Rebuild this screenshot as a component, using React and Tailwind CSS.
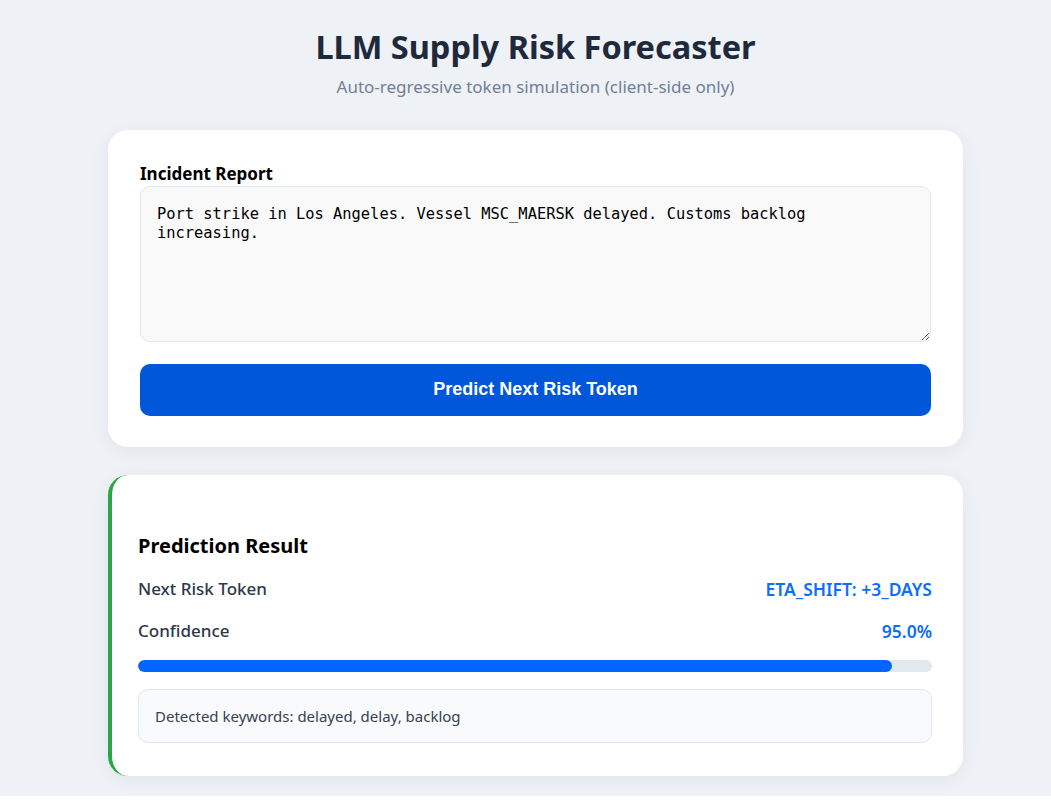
export default function App() {
  const confidence = 95;
  return (
    <div className="min-h-[795px] bg-[#eef1f5] pl-[20px] pt-[25px] pb-[20px]" style={{ fontFamily: '"Noto Sans", "Open Sans", sans-serif' }}>
      <div className="mx-auto w-[855px]">
        <div className="text-center">
          <h1 className="text-[32.5px] leading-[44px] font-bold text-[#1e293b]">LLM Supply Risk Forecaster</h1>
          <p className="mt-[5px] text-[17px] text-[#718096]">Auto-regressive token simulation (client-side only)</p>
        </div>

        <div className="mt-[30px] bg-white rounded-[20px] shadow-[0_4px_20px_rgba(0,0,0,0.06)] px-[32px] pt-[32px] pb-[31px]">
          <label className="block text-[17px] font-bold text-black leading-[24px]">Incident Report</label>
          <textarea
            className="block w-full h-[156px] rounded-[10px] border border-[#e2e8f0] bg-[#f9f9fa] pl-[16px] pr-[20px] pt-[18px] pb-[14px] text-[15.4px] leading-[19.5px] text-black outline-none"
            style={{ fontFamily: '"DejaVu Sans Mono", "Liberation Mono", monospace' }}
            defaultValue="Port strike in Los Angeles. Vessel MSC_MAERSK delayed. Customs backlog increasing."
          />
          <button
            className="mt-[22px] w-full h-[52px] rounded-[10px] bg-[#0057d9] text-white text-[18px] font-bold"
            style={{ fontFamily: '"Liberation Sans", Arial, sans-serif' }}
          >
            Predict Next Risk Token
          </button>
        </div>

        <div className="mt-[28px] bg-white rounded-[20px] border-l-[4px] border-[#28a745] shadow-[0_4px_20px_rgba(0,0,0,0.06)] pl-[26px] pr-[31px] pt-[57px] pb-[33px]">
          <h3 className="text-[20px] font-bold text-black leading-[28px]">Prediction Result</h3>
          <div className="mt-[17px] flex justify-between items-center text-[17px] leading-[24px]">
            <span className="font-medium text-[#2d3748]">Next Risk Token</span>
            <span className="font-semibold text-[#0d6efd] text-[17.5px]">ETA_SHIFT: +3_DAYS</span>
          </div>
          <div className="mt-[18px] flex justify-between items-center text-[17px] leading-[24px]">
            <span className="font-medium text-[#2d3748]">Confidence</span>
            <span className="font-semibold text-[#0d6efd] text-[17.5px]">95.0%</span>
          </div>
          <div className="mt-[17px] h-[12px] w-full rounded-full bg-[#e2e8f0] overflow-hidden">
            <div className="h-full rounded-full bg-[#0066ff]" style={{ width: `${confidence}%` }} />
          </div>
          <div className="mt-[17px] rounded-[10px] border border-[#e2e8f0] bg-[#f8fafc] px-[16px] py-[15px] text-[15px] leading-[22px] text-[#374151]">
            Detected keywords: delayed, delay, backlog
          </div>
        </div>
      </div>
    </div>
  );
}
